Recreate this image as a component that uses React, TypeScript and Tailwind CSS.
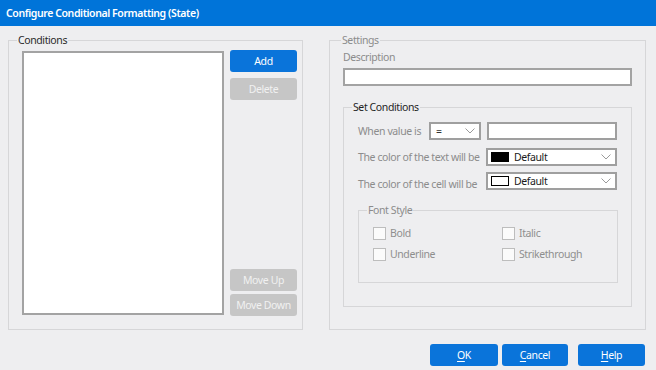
import React from "react";

const Chevron = () => (
  <svg width="10" height="6" viewBox="0 0 10 6" className="shrink-0">
    <polyline points="0.5,0.5 5,5 9.5,0.5" fill="none" stroke="#9a9a9a" strokeWidth="1" />
  </svg>
);

const ColorCombo = ({ swatch }: { swatch: string }) => (
  <div className="w-[131px] h-[18px] border-2 border-[#9f9f9f] bg-white flex items-center pl-[3px] pr-[4px]">
    <div className={`w-[18px] h-[10px] border border-black ${swatch}`} />
    <span className="ml-[5px] flex-1 text-[#1a1a1a]">Default</span>
    <Chevron />
  </div>
);

const Check = ({ label, w }: { label: string; w?: string }) => (
  <div className={`flex items-center gap-[4px] ${w ?? ""}`}>
    <div className="w-[13px] h-[13px] border border-[#bdbdbd] bg-[#fbfbfb]" />
    <span className="text-[#8e8e8e]">{label}</span>
  </div>
);

const SideButton = ({ label, primary }: { label: string; primary?: boolean }) => (
  <div
    className={`w-[67px] h-[22px] rounded-[3px] flex items-center justify-center ${
      primary ? "bg-[#0a74da] text-white" : "bg-[#c6c6c6] text-[#f1f1f1]"
    }`}
  >
    {label}
  </div>
);

const DialogButton = ({ first, rest, w }: { first: string; rest: string; w: string }) => (
  <div className={`${w} h-[22px] rounded-[3px] bg-[#0a74da] text-white flex items-center justify-center`}>
    <span className="underline underline-offset-2">{first}</span>
    {rest}
  </div>
);

export default function App() {
  return (
    <div className="w-[656px] h-[370px] bg-[#eeeef0] flex flex-col overflow-hidden font-['Noto_Sans',sans-serif] text-[10.5px] leading-[14px] tracking-[-0.4px]">
      <div className="h-[26px] shrink-0 bg-[#0074d9] flex items-center pl-[6px] text-white font-semibold">
        Configure Conditional Formatting (State)
      </div>

      <div className="flex pl-[8px] pt-[7px]">
        <fieldset className="w-[295px] min-w-0 border border-[#d6d6d8] pl-[13px] pr-[5px] pt-[3px] pb-[13px]">
          <legend className="-ml-[5px] px-px text-[#2a2a2a]">Conditions</legend>
          <div className="flex gap-[6px] h-[266px]">
            <div className="mt-px w-[202px] h-[264px] bg-white border-2 border-[#a3a3a3]" />
            <div className="flex flex-col justify-between">
              <div className="flex flex-col gap-[6px]">
                <SideButton label="Add" primary />
                <SideButton label="Delete" />
              </div>
              <div className="flex flex-col gap-[3px]">
                <SideButton label="Move Up" />
                <SideButton label="Move Down" />
              </div>
            </div>
          </div>
        </fieldset>

        <fieldset className="ml-[26px] w-[317px] min-w-0 border border-[#d6d6d8] pl-[13px] pr-[13px] pt-[3px] pb-[22px]">
          <legend className="-ml-[2px] px-px text-[#8c8c8c]">Settings</legend>
          <div className="text-[#8c8c8c]">Description</div>
          <div className="mt-[4px] w-[289px] h-[18px] bg-white border-2 border-[#a3a3a3]" />

          <fieldset className="mt-[14px] w-[289px] min-w-0 border border-[#d6d6d8] pl-[14px] pt-[8px] pb-[23px]">
            <legend className="-ml-[6px] px-px text-[#1f1f1f]">Set Conditions</legend>
            <div className="flex items-center h-[18px]">
              <span className="w-[71px] whitespace-nowrap text-[#8c8c8c]">When value is</span>
              <div className="w-[52px] h-[18px] border-2 border-[#9f9f9f] bg-white flex items-center pl-[5px] pr-[4px]">
                <span className="flex-1 text-[#333]">=</span>
                <Chevron />
              </div>
              <div className="ml-[6px] w-[130px] h-[18px] border-2 border-[#9f9f9f] bg-white" />
            </div>
            <div className="mt-[8px] flex items-center h-[18px]">
              <span className="w-[128px] whitespace-nowrap text-[#8c8c8c]">The color of the text will be</span>
              <ColorCombo swatch="bg-black" />
            </div>
            <div className="mt-[6px] flex items-start h-[18px]">
              <span className="w-[128px] mt-[5px] whitespace-nowrap text-[#8c8c8c]">The color of the cell will be</span>
              <ColorCombo swatch="bg-white" />
            </div>

            <fieldset className="mt-[13px] w-[260px] min-w-0 border border-[#d6d6d8] pl-[14px] pt-[9px] pb-[21px]">
              <legend className="-ml-[6px] px-px text-[#8c8c8c]">Font Style</legend>
              <div className="flex h-[14px] items-center">
                <Check label="Bold" w="w-[129px]" />
                <Check label="Italic" />
              </div>
              <div className="mt-[7px] flex h-[14px] items-center">
                <Check label="Underline" w="w-[129px]" />
                <Check label="Strikethrough" />
              </div>
            </fieldset>
          </fieldset>
        </fieldset>
      </div>

      <div className="mt-[14px] flex justify-end pr-[11px]">
        <DialogButton first="O" rest="K" w="w-[68px]" />
        <div className="ml-[4px]">
          <DialogButton first="C" rest="ancel" w="w-[66px]" />
        </div>
        <div className="ml-[10px]">
          <DialogButton first="H" rest="elp" w="w-[67px]" />
        </div>
      </div>
    </div>
  );
}
